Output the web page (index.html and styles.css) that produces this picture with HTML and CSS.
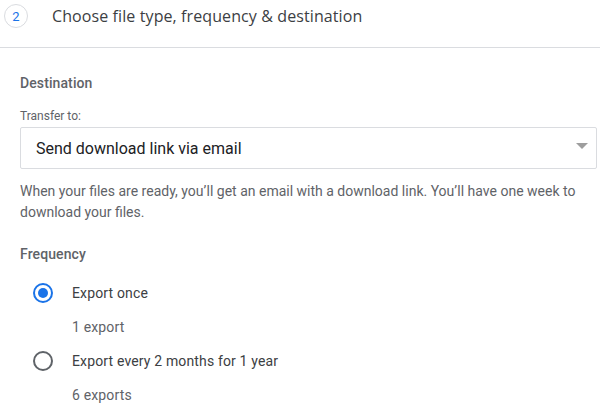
FILE: index.html
```html
<!DOCTYPE html>
<html>
<head>
<meta charset="utf-8">
<link rel="stylesheet" href="styles.css">
</head>
<body>
<div class="page">
  <header class="step">
    <div class="step-num">2</div>
    <h1 class="step-title">Choose file type, frequency &amp; destination</h1>
  </header>
  <section class="body">
    <h2 class="section-title">Destination</h2>
    <label class="field-label">Transfer to:</label>
    <div class="select">
      <span class="select-text">Send download link via email</span>
      <svg class="select-arrow" width="12" height="6" viewBox="0 0 12 6"><path d="M0 0h12L6 6z" fill="#9e9e9e"/></svg>
    </div>
    <p class="help">When your files are ready, you’ll get an email with a download link. You’ll have one week to download your files.</p>
    <h2 class="section-title freq">Frequency</h2>
    <div class="options">
      <div class="option">
        <span class="radio checked"></span>
        <div class="option-text">
          <div class="option-label">Export once</div>
          <div class="option-sub">1 export</div>
        </div>
      </div>
      <div class="option">
        <span class="radio"></span>
        <div class="option-text">
          <div class="option-label">Export every 2 months for 1 year</div>
          <div class="option-sub">6 exports</div>
        </div>
      </div>
    </div>
  </section>
</div>
</body>
</html>
```

FILE: styles.css
```css
* { box-sizing: border-box; }
html, body { margin: 0; padding: 0; background: #fff; }
body { font-family: Roboto, "Liberation Sans", sans-serif; color: #5f6368; }
.page { width: 600px; height: 410px; overflow: hidden; }
.step {
  display: flex;
  align-items: center;
  height: 48px;
  padding: 0 0 15px 4px;
  border-bottom: 1px solid #dadce0;
}
.step-num {
  width: 24px; height: 24px;
  border: 1px solid #dadce0;
  border-radius: 50%;
  display: flex; align-items: center; justify-content: center;
  font-size: 13px;
  color: #1a73e8;
}
.step-title {
  margin: 0 0 0 24px;
  font-family: "Open Sans", Roboto, sans-serif;
  font-size: 16px;
  font-weight: 400;
  color: #3c4043;
  letter-spacing: 0.1px;
}
.body { padding: 25px 3px 0 20px; }
.section-title {
  margin: 0;
  font-size: 14px;
  font-weight: 500;
  color: #5f6368;
  line-height: 20px;
  letter-spacing: 0.1px;
}
.field-label {
  display: block;
  margin-top: 15px;
  font-size: 12px;
  line-height: 16px;
  color: #5f6368;
}
.select {
  margin-top: 3px;
  height: 42px;
  border: 1px solid #dadce0;
  border-radius: 2px;
  display: flex;
  align-items: center;
  justify-content: space-between;
  padding: 0 8px 0 15px;
}
.select-text { font-size: 16px; color: #202124; }
.select-arrow { margin-top: -4px; }
.help {
  margin: 12px 0 0;
  font-size: 14px;
  line-height: 21px;
  color: #5f6368;
}
.freq { margin-top: 21px; }
.options { padding-left: 13px; margin-top: 19px; }
.option { display: flex; align-items: flex-start; }
.radio {
  width: 20px; height: 20px;
  border: 2px solid #5f6368;
  border-radius: 50%;
  flex: none;
  position: relative;
}
.radio.checked { border-color: #1a73e8; }
.radio.checked::after {
  content: "";
  position: absolute;
  left: 3px; top: 3px;
  width: 10px; height: 10px;
  border-radius: 50%;
  background: #1a73e8;
}
.option-text { margin-left: 19px; }
.option-label { font-size: 14px; line-height: 20px; color: #3c4043; letter-spacing: 0.15px; }
.option-sub { font-size: 14px; line-height: 20px; margin-top: 14px; margin-bottom: 14px; color: #5f6368; letter-spacing: 0.15px; }
```
